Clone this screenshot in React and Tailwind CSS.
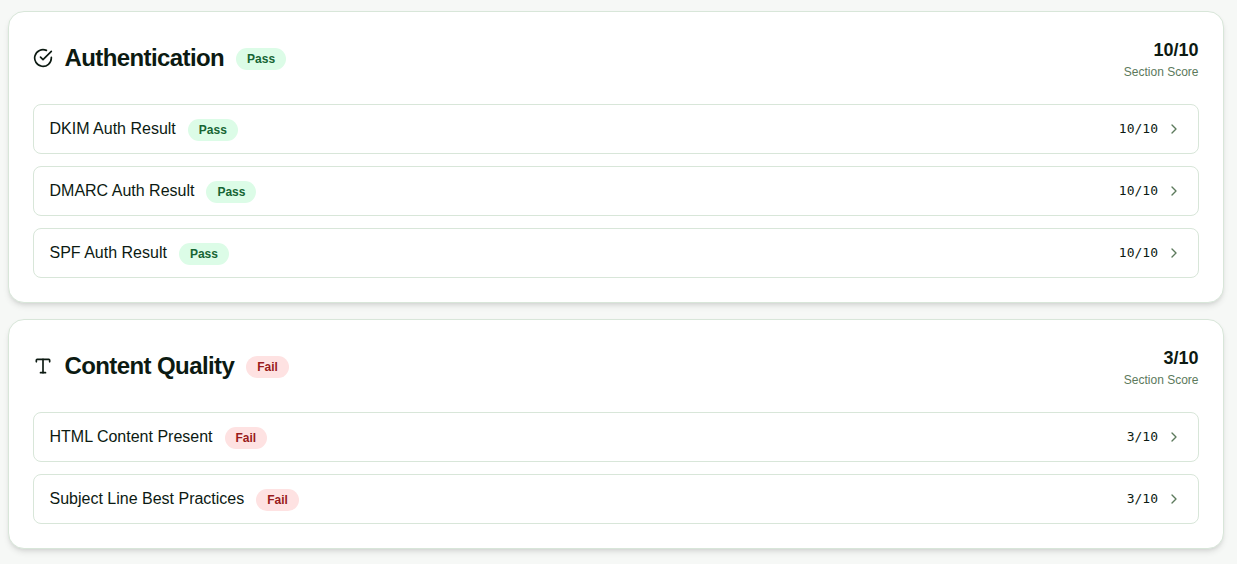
import { Type, ChevronRight } from "lucide-react";

function CheckCircle({ className }) {
  return (
    <svg className={className} viewBox="0 0 24 24" fill="none" stroke="currentColor" strokeWidth="2" strokeLinecap="round" strokeLinejoin="round">
      <path d="M22 11.08V12a10 10 0 1 1-5.93-9.14" />
      <path d="m9 11 3 3L22 4" />
    </svg>
  );
}

const sections = [
  { title: "Authentication", icon: CheckCircle, status: "Pass", score: "10/10", items: ["DKIM Auth Result", "DMARC Auth Result", "SPF Auth Result"] },
  { title: "Content Quality", icon: Type, status: "Fail", score: "3/10", items: ["HTML Content Present", "Subject Line Best Practices"] },
];

function Badge({ status }) {
  const tone = status === "Pass" ? "bg-[#dcfce7] text-[#166534]" : "bg-[#fee2e2] text-[#991b1b]";
  return <span className={`mt-0.5 rounded-full border border-transparent px-2.5 py-0.5 text-xs font-semibold ${tone}`}>{status}</span>;
}

function Row({ label, status, score }) {
  return (
    <div className="flex h-[50px] items-center justify-between rounded-lg border border-[#d8e6d9] pr-4 pl-[15.5px]">
      <div className="flex items-center gap-3">
        <span className="text-base">{label}</span>
        <Badge status={status} />
      </div>
      <div className="flex items-center gap-2">
        <span className="font-['DejaVu_Sans_Mono',monospace] text-[13px]">{score}</span>
        <ChevronRight className="size-4 text-[#5c7a5c]" />
      </div>
    </div>
  );
}

function Section({ title, icon: Icon, status, score, items }) {
  return (
    <section className="rounded-2xl border border-[#d8e6d9] bg-white p-6 shadow-md">
      <header className="mb-6 flex items-center justify-between">
        <div className="flex items-center gap-3">
          <Icon className="size-5" />
          <h2 className="-ml-[0.5px] text-2xl font-semibold tracking-tight">{title}</h2>
          <Badge status={status} />
        </div>
        <div className="pr-[0.5px] text-right">
          <div className="text-lg font-bold">{score}</div>
          <div className="text-xs text-[#5c7a5c]">Section Score</div>
        </div>
      </header>
      <div className="flex flex-col gap-3">
        {items.map((label) => <Row key={label} label={label} status={status} score={score} />)}
      </div>
    </section>
  );
}

export default function App() {
  return (
    <main className="flex h-[564px] flex-col gap-4 bg-[#f6f8f6] pt-[11px] pr-[13px] pl-2 font-['Liberation_Sans',Arial,sans-serif] text-[#0c1a12]">
      {sections.map((s) => <Section key={s.title} {...s} />)}
    </main>
  );
}
